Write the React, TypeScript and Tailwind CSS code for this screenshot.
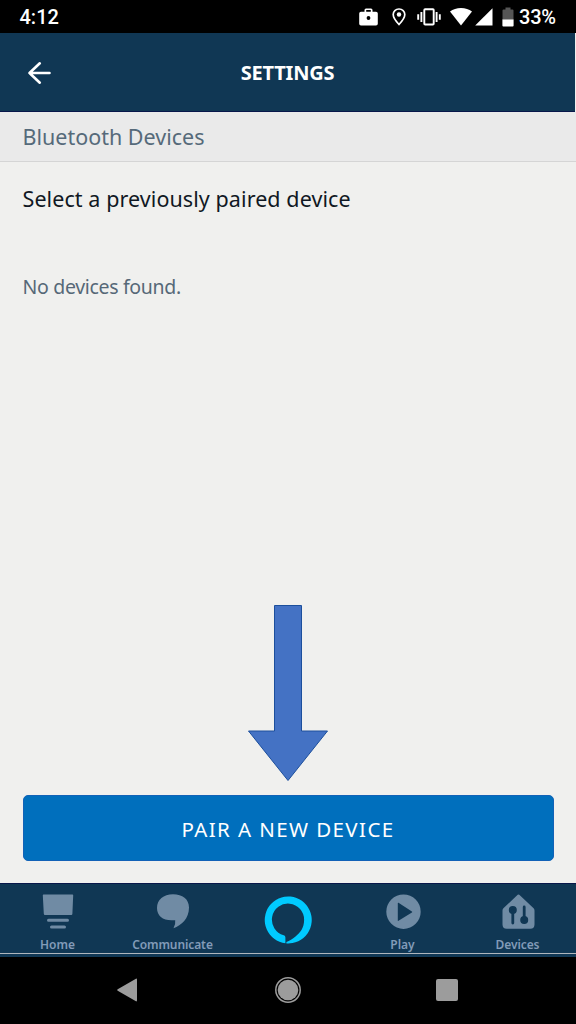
import type { ReactNode } from "react";

function StatusBar() {
  return (
    <header className="flex h-[33px] shrink-0 items-center bg-black pl-[19px] text-white">
      <span className="w-[340px] pt-[2px] pl-[0.500px] font-['Roboto',sans-serif] text-[20px] leading-[33px] font-medium">4:12</span>
      <svg className="h-[18px] w-[19px] shrink-0" viewBox="0 0 19 18" fill="currentColor">
        <path
          fillRule="evenodd"
          d="M5.5 3.8V2Q5.5 .4 7 .4h5q1.5 0 1.5 1.6v1.8H17q1.8 0 1.8 1.8v10.1q0 1.8-1.8 1.8H2Q.2 17.500.2 15.700V5.600Q.2 3.800 2 3.800zM7.200 3.800h4.600V2.100H7.200zM9.500 8.100a1.900 1.900 0 1 0 0 3.800 1.900 1.900 0 0 0 0-3.800z"
        />
      </svg>
      <svg className="ml-[14px] h-[18px] w-[14px] shrink-0" viewBox="0 0 14 18">
        <path d="M7 1C3.700 1 1.200 3.500 1.200 6.600 1.200 10.500 7 16.500 7 16.500s5.800-6 5.800-9.900C12.800 3.500 10.300 1 7 1z" fill="none" stroke="currentColor" strokeWidth="1.700" />
        <circle cx="7" cy="6.500" r="2.200" fill="currentColor" />
      </svg>
      <svg className="ml-[11px] h-[18px] w-[24px] shrink-0" viewBox="0 0 24 18" fill="none" stroke="currentColor" strokeWidth="1.900">
        <rect x="7.300" y="1.300" width="9.400" height="15.200" rx=".8" />
        <path d="M4.400 4v10M1.200 6.300v5.400M19.600 4v10M22.800 6.300v5.400" />
      </svg>
      <svg className="ml-[9px] h-[18px] w-[22px] shrink-0" viewBox="0 0 22 18" fill="currentColor">
        <path d="M0 3.500Q4.500 0 11 0t11 3.500L11 17.600z" />
      </svg>
      <svg className="ml-[3px] h-[18px] w-[18px] shrink-0" viewBox="0 0 18 18" fill="currentColor">
        <path d="M17.500.2v17.400H.2z" />
      </svg>
      <svg className="ml-[9px] h-[20px] w-[12px] shrink-0" viewBox="0 0 12 20">
        <path d="M3.500.5h5v2h2q1 0 1 1V13H.5V3.500q0-1 1-1h2z" fill="#555" />
        <path d="M.4 12.600h11.200v6q0 .9-.9.900H1.300q-.9 0-.9-.9z" fill="white" />
      </svg>
      <span className="ml-[5px] pt-[2px] font-['Roboto',sans-serif] text-[20px] leading-[33px] font-medium tracking-[-0.2px]">33%</span>
    </header>
  );
}

function Tab({ label, spacing, children }: { label: string; spacing: string; children: ReactNode }) {
  return (
    <button className="flex flex-1 flex-col items-center pt-[10px] text-[#708ba4]">
      <svg className="h-[36px] w-[36px]" viewBox="0 0 36 36" fill="currentColor">
        {children}
      </svg>
      <span className={`mt-[7px] text-[12px] leading-[16px] font-semibold text-[#829bb8] ${spacing}`}>{label}</span>
    </button>
  );
}

export default function App() {
  return (
    <div className="flex h-[1024px] w-[576px] flex-col overflow-hidden bg-[#f0f0ee] font-['Noto_Sans','Open_Sans',sans-serif]">
      <StatusBar />

      <div className="mr-px grid h-[79px] shrink-0 grid-cols-3 items-center border-b border-[#08174a] bg-[#103754] pt-px text-white">
        <svg className="ml-[27px] h-[24px] w-[25px]" viewBox="0 0 25 24" fill="none" stroke="currentColor" strokeWidth="2.600" strokeLinecap="round" strokeLinejoin="round">
          <path d="M2.500 12h20M12.800 2.300 2.500 12l10.300 9.700" />
        </svg>
        <h1 className="text-center text-[20px] leading-[26px] font-bold tracking-[-0.200px]">SETTINGS</h1>
      </div>

      <div className="flex h-[50px] shrink-0 items-center border-b border-[#d5d5d5] bg-[#eaeaea] pl-[22.500px]">
        <h2 className="text-[21.500px] leading-[30px] text-[#566a7a]">Bluetooth Devices</h2>
      </div>

      <main className="flex flex-1 flex-col px-[22px] pt-[22px]">
        <p className="pl-[0.500px] text-[21.500px] leading-[30px] tracking-[0.080px] whitespace-nowrap text-[#101823]">Select a previously paired device</p>
        <p className="mt-[59px] pl-[0.500px] text-[19.500px] leading-[28px] tracking-[-0.320px] whitespace-nowrap text-[#566877]">No devices found.</p>
        <svg className="mt-auto mr-px h-[178px] w-[82px] self-center" viewBox="0 0 82 178">
          <path d="M27.500 1.500h27v125.500h26L41 176.500 1.500 127h26z" fill="#4472c4" stroke="#1c4f9c" strokeWidth="1" />
        </svg>
        <button className="mt-[13px] mb-[22px] ml-[0.500px] h-[66px] w-[531px] shrink-0 rounded-[5px] border border-[#1262b7] bg-[#006fbd] pt-px text-center text-[20.500px] leading-[28px] tracking-[1.400px] text-white">
          PAIR A NEW DEVICE
        </button>
      </main>

      <nav className="flex h-[71px] shrink-0 border-t border-b border-t-[#08174a] border-b-[#b0b6bc] bg-[#103754] pr-px">
        <Tab label="Home" spacing="tracking-normal">
          <path d="M3.500.5h29q.8 0 .7.800l-.8 18.400q0 1.200-1.200 1.200H5q-1.200 0-1.200-1.200L2.800 1.300Q2.700.5 3.500.5zM8.500 24.700h19a1.500 1.500 0 0 1 0 3h-19a1.500 1.500 0 0 1 0-3zM11.500 31.600h13a1.500 1.500 0 0 1 0 3h-13a1.500 1.500 0 0 1 0-3z" />
        </Tab>
        <Tab label="Communicate" spacing="tracking-[-0.100px]">
          <path d="M18 .2c9.500 0 16 4.800 16 13.300 0 11-7.500 18-15.500 20.700q2.300-3.700 1.700-7.900h-3.700C7.500 26.300 2 21.500 2 14 2 5.500 8.500.2 18 .2z" />
        </Tab>
        <button className="flex flex-1 items-start justify-center pt-[12px]" aria-label="Alexa">
          <svg className="h-[48px] w-[48px]" viewBox="0 0 48 48">
            <path
              fill="#00caff"
              fillRule="evenodd"
              d="M21.400 47.300V41.400C21.400 40.300 20.700 39.600 19.700 39.200A16.100 16.100 0 1 1 40.100 24C40.100 32 36 37 31.500 40.500 28.500 42.900 25.500 44.700 22.400 46.100V47.400A23.500 23.500 0 1 0 21.400 47.300z"
            />
          </svg>
        </button>
        <Tab label="Play" spacing="tracking-normal">
          <path fillRule="evenodd" d="M18.500 .5a17.200 17.200 0 1 0 0 34.400 17.200 17.200 0 0 0 0-34.400zM12.800 9.200v17.200q0 .8.700.4l13.400-8.300q.8-.5 0-1L13.500 8.800q-.7-.4-.7.400z" />
        </Tab>
        <Tab label="Devices" spacing="tracking-[-0.100px]">
          <g transform="translate(.5 0)">
            <path d="M17.200.8q.8-.8 1.600 0l14.300 13.500q.9.900.9 2.100v14.200q0 4.200-4.200 4.200H6.200Q2 34.800 2 30.600V16.400q0-1.200.9-2.100z" />
            <g fill="#103754" stroke="#103754" strokeWidth="2.800" strokeLinecap="round">
              <circle cx="12.300" cy="16" r="2.600" />
              <path d="M12.300 17v12" />
              <circle cx="23.700" cy="26" r="2.600" />
              <path d="M23.700 25V13" />
            </g>
          </g>
        </Tab>
      </nav>
      <div className="h-[3px] shrink-0 bg-[#103754]" />

      <footer className="grid h-[67px] shrink-0 grid-cols-[254px_67px_255px] items-center bg-black pb-px text-[#9c9c9c]">
        <svg className="ml-[116px] h-[24px] w-[22px]" viewBox="0 0 22 24" fill="currentColor">
          <path d="M19.500.9Q21 0 21 1.700v20.600q0 1.700-1.500.8L1.700 12.800q-1.300-.8 0-1.600z" />
        </svg>
        <svg className="mx-auto h-[28px] w-[28px]" viewBox="0 0 28 28">
          <circle cx="14" cy="14" r="12.200" fill="none" stroke="currentColor" strokeWidth="1.500" />
          <circle cx="14" cy="14" r="10.300" fill="currentColor" />
        </svg>
        <div className="ml-[115px] size-[22px] rounded-[2px] bg-[#9c9c9c]" />
      </footer>
    </div>
  );
}
